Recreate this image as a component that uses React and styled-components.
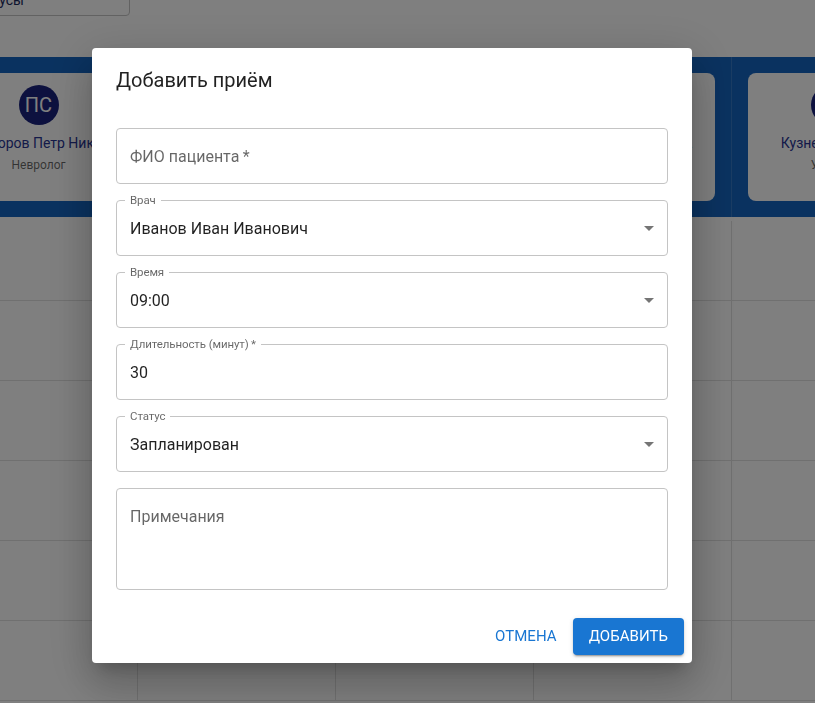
import React from "react";
import styled, { createGlobalStyle } from "styled-components";

const GlobalStyle = createGlobalStyle`
  * { box-sizing: border-box; }
  html, body {
    margin: 0;
    background: #fff;
    overflow: hidden;
  }
  body {
    font-family: Roboto, "Liberation Sans", Arial, sans-serif;
    color: rgba(0, 0, 0, 0.87);
  }
`;

const doctors = [
  { initials: "ПС", name: "Сидоров Петр Николаевич", spec: "Невролог" },
  { initials: "ИИ", name: "Иванов Иван Иванович", spec: "Терапевт" },
  { initials: "ПА", name: "Петрова Анна Сергеевна", spec: "Кардиолог" },
  { initials: "СМ", name: "Смирнова Мария Олеговна", spec: "Педиатр" },
  { initials: "КИ", name: "Кузнецов Иван", spec: "Уролог" },
];

const slots = ["09:00", "09:30", "10:00", "10:30", "11:00", "11:30"];

// page behind the modal (scrolled a little to the right and down)
const Page = styled.div`
  margin: -24px 0 0 -60px;
`;

const Toolbar = styled.div`
  display: flex;
  height: 40px;
  margin-bottom: 41px;
`;

const StatusFilter = styled.div`
  width: 190px;
  height: 40px;
  border: 1px solid #c4c4c4;
  border-radius: 4px;
  padding: 8px 0 0 3px;
  font-size: 14px;
  line-height: 30px;
  color: #1a2a5e;
`;

const HeaderRow = styled.div`
  display: grid;
  grid-template-columns: repeat(5, 198px);
  height: 160px;
  background: #1565c0;
`;

const HeaderCell = styled.div`
  padding: 16px;
  border-right: 1px solid rgba(255, 255, 255, 0.14);
`;

const DoctorCard = styled.div`
  height: 128px;
  background: #fff;
  border-radius: 8px;
  padding: 12px 16px;
  text-align: center;
`;

const Avatar = styled.div`
  width: 40px;
  height: 40px;
  margin: 0 auto 8px;
  border-radius: 50%;
  background: #1a237e;
  color: #fff;
  display: flex;
  align-items: center;
  justify-content: center;
  font-size: 20px;
`;

const DoctorName = styled.div`
  font-size: 14px;
  line-height: 20px;
  color: #283593;
  white-space: nowrap;
  overflow: hidden;
  text-overflow: ellipsis;
`;

const DoctorSpec = styled.div`
  margin-top: 2px;
  font-size: 12px;
  line-height: 20px;
  color: rgba(0, 0, 0, 0.6);
`;

const Body = styled.div`
  padding-top: 4px;
`;

const SlotRow = styled.div`
  display: grid;
  grid-template-columns: repeat(5, 198px);
  height: 80px;
  border-bottom: 1px solid #e0e0e0;
`;

const SlotCell = styled.div`
  border-right: 1px solid #e0e0e0;
`;

// modal
const Backdrop = styled.div`
  position: fixed;
  inset: 0;
  background: rgba(0, 0, 0, 0.5);
  display: flex;
  align-items: center;
  justify-content: center;
  padding: 8px 31px 0 0;
`;

const Dialog = styled.div`
  width: 600px;
  background: #fff;
  border-radius: 4px;
  box-shadow: 0px 11px 15px -7px rgba(0, 0, 0, 0.2),
    0px 24px 38px 3px rgba(0, 0, 0, 0.14),
    0px 9px 46px 8px rgba(0, 0, 0, 0.12);
  display: flex;
  flex-direction: column;
`;

const Title = styled.h2`
  margin: 0;
  padding: 16px 24px;
  font-size: 20px;
  font-weight: 400;
  line-height: 32px;
  color: rgba(0, 0, 0, 0.87);
`;

const Content = styled.div`
  padding: 11px 24px 20px;
  display: flex;
  flex-direction: column;
  gap: 11px;
`;

const Outline = styled.fieldset`
  margin: 0;
  min-width: 0;
  padding: 0 6px 0 8px;
  border: 1px solid #c4c4c4;
  border-radius: 4px;
`;

const Legend = styled.legend`
  height: 11px;
  padding: ${(p) => (p.$empty ? "0" : "0 5px")};
  font-size: 11.5px;
  line-height: 11px;
  letter-spacing: -0.1px;
  color: rgba(0, 0, 0, 0.6);
  white-space: nowrap;
`;

const InputRow = styled.div`
  display: flex;
  align-items: ${(p) => (p.$rows ? "flex-start" : "center")};
  height: ${(p) => (p.$rows ? p.$rows * 23 : 23)}px;
  box-sizing: content-box;
  padding: 10.5px 0 15.5px 5px;
  font-size: 16px;
  line-height: 23px;
`;

const Value = styled.span`
  flex: 1;
  color: ${(p) => (p.$placeholder ? "rgba(0, 0, 0, 0.6)" : "rgba(0, 0, 0, 0.87)")};
`;

const ArrowIcon = styled.svg`
  width: 24px;
  height: 24px;
  flex: none;
  fill: rgba(0, 0, 0, 0.54);
`;

const Actions = styled.div`
  display: flex;
  justify-content: flex-end;
  align-items: center;
  gap: 8px;
  padding: 8px;
`;

const Button = styled.button`
  border: 0;
  border-radius: 4px;
  padding: ${(p) => (p.$contained ? "6px 16px" : "6px 8px")};
  font-family: Roboto, "Liberation Sans", Arial, sans-serif;
  font-size: 15px;
  font-weight: 400;
  line-height: 25px;
  letter-spacing: 0.05px;
  text-transform: uppercase;
  cursor: pointer;
  background: ${(p) => (p.$contained ? "#1976d2" : "transparent")};
  color: ${(p) => (p.$contained ? "#fff" : "#1976d2")};
  box-shadow: ${(p) =>
    p.$contained
      ? "0px 3px 1px -2px rgba(0,0,0,0.2), 0px 2px 2px 0px rgba(0,0,0,0.14), 0px 1px 5px 0px rgba(0,0,0,0.12)"
      : "none"};
`;

function Field({ label, value, select, rows }) {
  return (
    <Outline>
      {value ? <Legend>{label}</Legend> : <Legend $empty />}
      <InputRow $rows={rows}>
        <Value $placeholder={!value}>{value || label}</Value>
        {select && (
          <ArrowIcon viewBox="0 0 24 24">
            <path d="M7 10l5 5 5-5z" />
          </ArrowIcon>
        )}
      </InputRow>
    </Outline>
  );
}

export default function App() {
  return (
    <React.Fragment>
      <GlobalStyle />
      <Page>
        <Toolbar>
          <StatusFilter>Все статусы</StatusFilter>
        </Toolbar>
        <HeaderRow>
          {doctors.map((d) => (
            <HeaderCell key={d.initials}>
              <DoctorCard>
                <Avatar>{d.initials}</Avatar>
                <DoctorName>{d.name}</DoctorName>
                <DoctorSpec>{d.spec}</DoctorSpec>
              </DoctorCard>
            </HeaderCell>
          ))}
        </HeaderRow>
        <Body>
          {slots.map((t) => (
            <SlotRow key={t}>
              {doctors.map((d) => (
                <SlotCell key={d.initials} />
              ))}
            </SlotRow>
          ))}
        </Body>
      </Page>

      <Backdrop>
        <Dialog>
          <Title>Добавить приём</Title>
          <Content>
            <Field label={"ФИО пациента\u2009*"} />
            <Field label="Врач" value="Иванов Иван Иванович" select />
            <Field label="Время" value="09:00" select />
            <Field label={"Длительность (минут)\u2009*"} value="30" />
            <Field label="Статус" value="Запланирован" select />
            <Field label="Примечания" rows={3} />
          </Content>
          <Actions>
            <Button>Отмена</Button>
            <Button $contained>Добавить</Button>
          </Actions>
        </Dialog>
      </Backdrop>
    </React.Fragment>
  );
}
